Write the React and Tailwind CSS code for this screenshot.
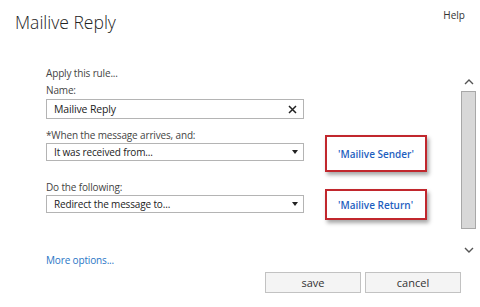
import React from 'react';

const font = { fontFamily: '"Open Sans", "Noto Sans", sans-serif' };

function Chevron({ down }) {
  return (
    <svg width="10" height="6" viewBox="0 0 10 6" className="block">
      <polyline
        points={down ? '1,1 5,5 9,1' : '1,5 5,1 9,5'}
        fill="none"
        stroke="#555"
        strokeWidth="1.4"
      />
    </svg>
  );
}

function Caret() {
  return (
    <svg width="6" height="4" viewBox="0 0 6 4" className="block">
      <polygon points="0,0 6,0 3,4" fill="#222" />
    </svg>
  );
}

function SelectBox({ value }) {
  return (
    <div className="mt-[1px] h-[18px] border border-[#b4b4b4] bg-white flex items-center justify-between pl-[7px] pr-[5px]">
      <span className="text-[10px] tracking-[-0.15px] leading-none text-[#222]">{value}</span>
      <Caret />
    </div>
  );
}

function RuleValue({ label, h }) {
  return (
    <div className={`${h} w-[102px] border-2 border-[#c1272d] bg-white shadow-[2px_3px_4px_rgba(0,0,0,0.35)] flex items-center pl-[11px]`}>
      <span className="text-[10px] font-semibold text-[#1f5fbf] leading-none">{label}</span>
    </div>
  );
}

export default function App() {
  return (
    <div className="w-[480px] h-[307px] bg-white overflow-hidden text-[#444]" style={font}>
      <div className="h-[60px] flex justify-between items-start">
        <h1 className="pl-[15px] pt-[10px] text-[17.5px] font-light leading-[24px] text-[#222]">Mailive Reply</h1>
        <span className="pr-[15px] pt-[8px] text-[10px] leading-[14px] text-[#333]">Help</span>
      </div>

      <div className="h-[212px] flex">
        <div className="w-[304px] pl-[46px] flex flex-col tracking-[-0.15px]">
          <p className="mt-[6px] text-[10px] leading-[14px]">Apply this rule...</p>
          <p className="mt-[3px] text-[10px] leading-[14px]">Name:</p>
          <div className="mt-[2px] h-[20px] border border-[#b4b4b4] bg-white flex items-center justify-between pl-[7px] pr-[6px]">
            <span className="text-[10.5px] leading-none text-[#222]">Mailive Reply</span>
            <svg width="9" height="9" viewBox="0 0 9 9" className="block">
              <path d="M1 1 L8 8 M8 1 L1 8" stroke="#222" strokeWidth="1.5" />
            </svg>
          </div>
          <p className="mt-[9px] text-[10px] leading-[14px]">*When the message arrives, and:</p>
          <SelectBox value="It was received from..." />
          <p className="mt-[19px] text-[10px] leading-[14px]">Do the following:</p>
          <SelectBox value="Redirect the message to..." />
          <a className="mt-[40px] text-[10px] leading-[14px] text-[#2a76c6]">More options...</a>
        </div>

        <div className="ml-[21px] flex flex-col">
          <div className="mt-[75px]">
            <RuleValue label="'Mailive Sender'" h="h-[37px]" />
          </div>
          <div className="mt-[17px]">
            <RuleValue label="'Mailive Return'" h="h-[31px]" />
          </div>
        </div>

        <div className="ml-auto mr-[4px] w-[15px] flex flex-col items-center">
          <div className="mt-[19px]">
            <Chevron />
          </div>
          <div className="mt-[6px] w-[15px] h-[138px] bg-[#d8d8d8] border border-[#a8a8a8]" />
          <div className="mt-[18px]">
            <Chevron down />
          </div>
        </div>
      </div>

      <div className="flex justify-end gap-[4px] pr-[19px]">
        <button className="w-[96px] h-[21px] bg-[#f4f4f4] border border-[#c2c2c2] text-[11px] text-[#333] leading-none">save</button>
        <button className="w-[96px] h-[21px] bg-[#f4f4f4] border border-[#c2c2c2] text-[11px] text-[#333] leading-none">cancel</button>
      </div>
    </div>
  );
}
